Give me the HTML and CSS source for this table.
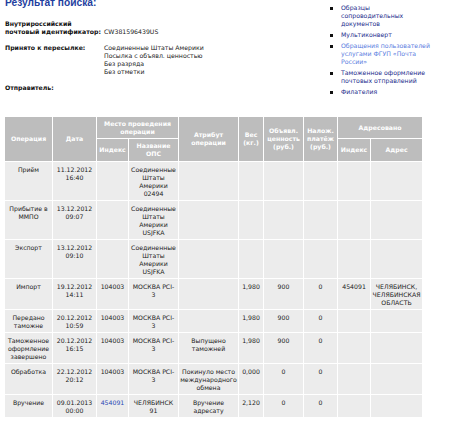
FILE: index.html
```html
<!DOCTYPE html>
<html lang="ru">
<head>
<meta charset="utf-8">
<title>Результат поиска</title>
<link rel="stylesheet" href="styles.css">
</head>
<body>
<div class="page">
  <div class="top">
    <div class="main">
      <h1 class="title">Результат поиска:</h1>
      <div class="info">
        <div class="label">Внутрироссийский<br>почтовый идентификатор:</div>
        <div class="value bottom">CW381596439US</div>
        <div class="label">Принято к пересылке:</div>
        <div class="value">Соединенные Штаты Америки<br>Посылка с объявл. ценностью<br>Без разряда<br>Без отметки</div>
        <div class="label">Отправитель:</div>
        <div class="value"></div>
      </div>
    </div>
    <ul class="side">
      <li><a class="navy" href="#">Правила оказания услуг<br>почтовой связи</a></li>
      <li><a class="navy" href="#">Образцы<br>сопроводительных<br>документов</a></li>
      <li><a class="navy" href="#">Мультиконверт</a></li>
      <li><a class="light" href="#">Обращения пользователей<br>услугами ФГУП «Почта<br>России»</a></li>
      <li><a class="navy" href="#">Таможенное оформление<br>почтовых отправлений</a></li>
      <li><a class="navy" href="#">Филателия</a></li>
    </ul>
  </div>

  <table class="ops">
    <colgroup>
      <col class="c1"><col class="c2"><col class="c3"><col class="c4"><col class="c5">
      <col class="c6"><col class="c7"><col class="c8"><col class="c9"><col class="c10">
    </colgroup>
    <thead>
      <tr class="h1">
        <th rowspan="2">Операция</th>
        <th rowspan="2">Дата</th>
        <th colspan="2">Место проведения<br>операции</th>
        <th rowspan="2">Атрибут<br>операции</th>
        <th rowspan="2">Вес<br>(кг.)</th>
        <th rowspan="2">Объявл.<br>ценность<br>(руб.)</th>
        <th rowspan="2">Налож.<br>платёж<br>(руб.)</th>
        <th colspan="2">Адресовано</th>
      </tr>
      <tr class="h2">
        <th>Индекс</th>
        <th>Название<br>ОПС</th>
        <th>Индекс</th>
        <th>Адрес</th>
      </tr>
    </thead>
    <tbody>
      <tr>
        <td>Приём</td><td>11.12.2012<br>16:40</td><td></td><td>Соединенные<br>Штаты<br>Америки<br>02494</td><td></td><td></td><td></td><td></td><td></td><td></td>
      </tr>
      <tr>
        <td>Прибытие в<br>ММПО</td><td>13.12.2012<br>09:07</td><td></td><td>Соединенные<br>Штаты<br>Америки<br>USJFKA</td><td></td><td></td><td></td><td></td><td></td><td></td>
      </tr>
      <tr>
        <td>Экспорт</td><td>13.12.2012<br>09:10</td><td></td><td>Соединенные<br>Штаты<br>Америки<br>USJFKA</td><td></td><td></td><td></td><td></td><td></td><td></td>
      </tr>
      <tr>
        <td>Импорт</td><td>19.12.2012<br>14:11</td><td>104003</td><td>МОСКВА PCI-<br>3</td><td></td><td>1,980</td><td>900</td><td>0</td><td>454091</td><td>ЧЕЛЯБИНСК,<br>ЧЕЛЯБИНСКАЯ<br>ОБЛАСТЬ</td>
      </tr>
      <tr>
        <td>Передано<br>таможне</td><td>20.12.2012<br>10:59</td><td>104003</td><td>МОСКВА PCI-<br>3</td><td></td><td>1,980</td><td>900</td><td>0</td><td></td><td></td>
      </tr>
      <tr>
        <td>Таможенное<br>оформление<br>завершено</td><td>20.12.2012<br>16:15</td><td>104003</td><td>МОСКВА PCI-<br>3</td><td>Выпущено<br>таможней</td><td>1,980</td><td>900</td><td>0</td><td></td><td></td>
      </tr>
      <tr>
        <td>Обработка</td><td>22.12.2012<br>20:12</td><td>104003</td><td>МОСКВА PCI-<br>3</td><td>Покинуло место<br>международного<br>обмена</td><td>0,000</td><td>0</td><td>0</td><td></td><td></td>
      </tr>
      <tr>
        <td>Вручение</td><td>09.01.2013<br>00:00</td><td><a class="idx" href="#">454091</a></td><td>ЧЕЛЯБИНСК<br>91</td><td>Вручение<br>адресату</td><td>2,120</td><td>0</td><td>0</td><td></td><td></td>
      </tr>
    </tbody>
  </table>
</div>
</body>
</html>
```

FILE: styles.css
```css
html, body {
  margin: 0;
  padding: 0;
  background: #ffffff;
}

body {
  font-family: "DejaVu Sans", Verdana, sans-serif;
  font-size: 6.2px;
  line-height: 8px;
  color: #222222;
}

.page {
  margin-top: -15px;
  padding-left: 4px;
}

.top {
  display: flex;
  align-items: flex-start;
}

.main {
  width: 325px;
  padding-top: 12px;
  padding-left: 1px;
}

.title {
  margin: 0;
  font-family: "Liberation Sans", Arial, sans-serif;
  font-size: 10.2px;
  line-height: 12px;
  font-weight: bold;
  color: #1f3fa0;
}

.info {
  margin-top: 11px;
  display: grid;
  grid-template-columns: 99px 1fr;
  row-gap: 8px;
}

.label {
  font-weight: bold;
  color: #111111;
}

.value {
  color: #222222;
}

.value.bottom {
  align-self: end;
}

.side {
  list-style: none;
  margin: 0;
  padding: 0;
  display: flex;
  flex-direction: column;
  gap: 3px;
}

.side li {
  display: flex;
  align-items: flex-start;
}

.side li::before {
  content: "";
  flex: none;
  width: 3px;
  height: 3px;
  margin-top: 3px;
  margin-right: 8px;
  background: #111111;
}

.side a {
  text-decoration: none;
}

.navy {
  color: #1b2c8c;
}

.light {
  color: #5a7de0;
}

.ops {
  margin-top: 20px;
  border-collapse: separate;
  border-spacing: 1px;
  table-layout: fixed;
  width: 419px;
}

.c1 { width: 47px; }
.c2 { width: 43px; }
.c3 { width: 31px; }
.c4 { width: 49px; }
.c5 { width: 59px; }
.c6 { width: 24px; }
.c7 { width: 39px; }
.c8 { width: 33px; }
.c9 { width: 32px; }
.c10 { width: 51px; }

.ops th {
  background: #bdbdbd;
  color: #ffffff;
  font-weight: bold;
  text-align: center;
  vertical-align: middle;
  padding: 0;
}

.ops .h1 th {
  height: 21px;
}

.ops .h2 th {
  height: 22px;
}

.ops td {
  background: #ececec;
  text-align: center;
  vertical-align: top;
  padding: 4px 0 2px;
  color: #222222;
  overflow: hidden;
}

.idx {
  color: #2a4bb5;
  text-decoration: none;
}
```
